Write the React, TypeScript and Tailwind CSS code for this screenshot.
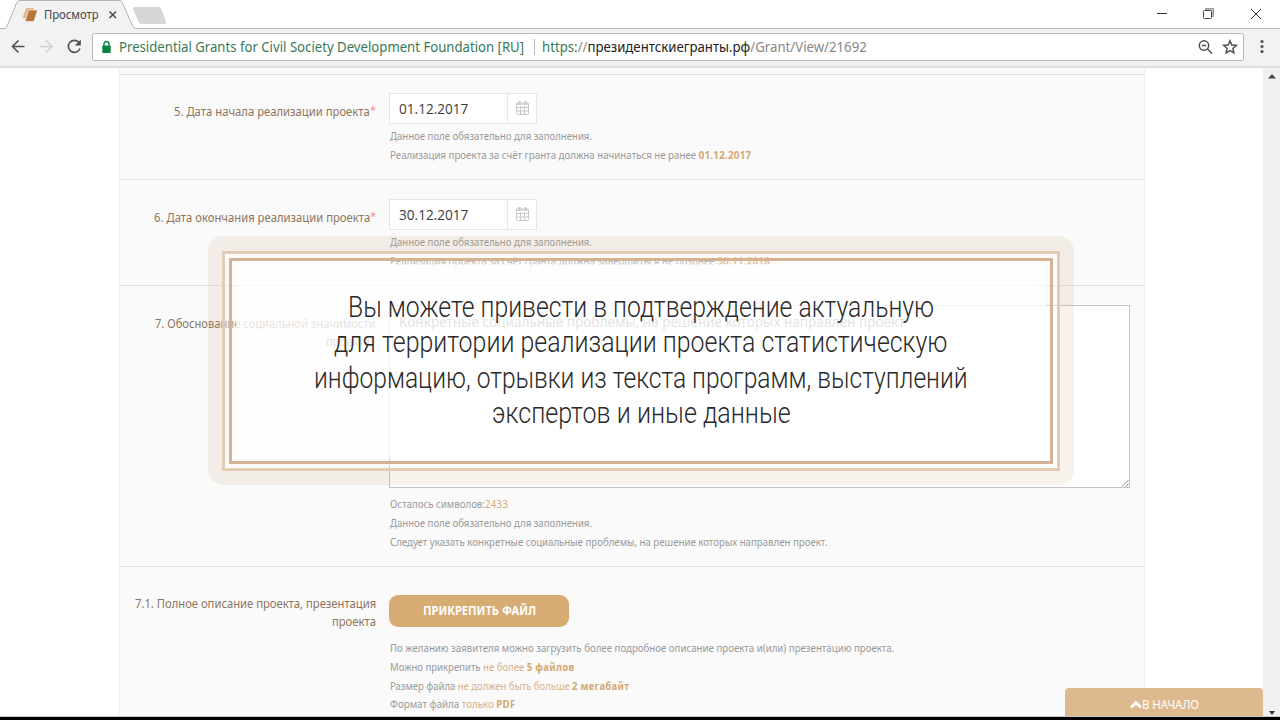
import { useLayoutEffect, useRef, useState } from 'react'
import type { ReactNode } from 'react'

// One line of text, condensed or stretched to the given width
function Fit({ w, className = '', children }: { w: number; className?: string; children: ReactNode }) {
  const ref = useRef<HTMLSpanElement>(null)
  const [scale, setScale] = useState(1)

  useLayoutEffect(() => {
    if (ref.current) setScale(w / ref.current.offsetWidth)
  }, [w])

  return (
    <span className={`inline-block whitespace-pre align-top ${className}`} style={{ width: w }}>
      <span ref={ref} className="inline-block origin-left align-top" style={{ transform: `scaleX(${scale})` }}>
        {children}
      </span>
    </span>
  )
}

function TabBar() {
  return (
    <div className="relative flex h-[29px] bg-white">
      <svg className="absolute inset-0" width="1280" height="29" fill="none">
        <path d="M0 28.5H4C6 28.5 6.500 27.500 7.500 25L16.500 3Q17.500 .5 20 .5H119Q121.500 .5 122.500 3L132.500 25.500Q134 28.500 136 28.500H1280V30H0Z" fill="#f2f2f2" stroke="#b4b4b4" />
        <path d="M135 7H158.500Q160.500 7 161.300 9L166 21.500Q166.800 24 164.500 24H142Q139.500 24 138.500 21.500L133 9Q132.300 7 135 7Z" fill="#d6d6d6" />
        <path d="M26 8H34L31 18H22.500Z" fill="#dfb98c" />
        <path d="M28.500 10H37.500L34 21.500H25Z" fill="#b4783c" stroke="#f2f2f2" strokeWidth=".7" />
        <path d="M109.500 11.500L116 18M116 11.500L109.500 18" stroke="#4a4a4a" strokeWidth="1.500" />
        <path d="M1157 13.500H1167M1251 9L1261 19M1261 9L1251 19" stroke="#333" />
        <path d="M1205.500 10.500V8.500H1213.500V16.500H1211.500" fill="#bbb" stroke="#999" />
        <rect x="1203.500" y="10.500" width="8" height="8" rx="1" fill="#fff" stroke="#444" />
      </svg>
      <div className="relative ml-11 pt-[5px] text-[12.500px] leading-5 text-[#444]">
        <Fit w={55}>Просмотр</Fit>
      </div>
    </div>
  )
}

function Toolbar() {
  return (
    <div className="flex h-[39px] items-start border-b-2 border-[#dedede] bg-[#f2f2f2] pt-1">
      <svg width="92" height="28" viewBox="0 0 92 28" fill="none" strokeWidth="1.600">
        <path d="M24.500 13.500H12.500M18.500 7.500L12.500 13.500L18.500 19.500" stroke="#505050" />
        <path d="M40 13.500H52M46 7.500L52 13.500L46 19.500" stroke="#d2d2d2" />
        <path d="M79 9.500A6 6 0 1 0 80 15.500" stroke="#505050" />
        <path d="M80.800 6.500V12.500H74.800Z" fill="#505050" />
      </svg>
      <div className="flex h-7 w-[1152px] items-center rounded-[2px] border border-[#b8b8b8] bg-white text-sm leading-5">
        <svg className="ml-[9px]" width="9" height="14" viewBox="0 0 9 14">
          <path d="M2 6V4A2.500 2.500 0 0 1 7 4V6" fill="none" stroke="#0b8043" strokeWidth="1.400" />
          <rect x=".3" y="5.500" width="8.400" height="7.500" rx=".8" fill="#0b8043" />
        </svg>
        <Fit w={405} className="ml-2 text-[#387a57]">Presidential Grants for Civil Society Development Foundation [RU]</Fit>
        <span className="ml-[10px] mr-[7px] h-4 w-px bg-[#bcbcbc]" />
        <Fit w={325}>
          <span className="text-[#387a57]">https:</span>
          <span className="text-[#888]">//</span>
          <span className="text-[#222]">президентскиегранты.рф</span>
          <span className="text-[#888]">/Grant/View/21692</span>
        </Fit>
        <svg className="ml-auto mr-1" width="42" height="20" viewBox="0 0 42 20" fill="none" stroke="#505050" strokeWidth="1.500">
          <circle cx="7" cy="8.500" r="4.700" />
          <path d="M10.500 12L15 16.500M4.800 8.500H9.200" />
          <path d="M33 3.800L34.800 8L39.300 8.400L35.900 11.400L36.900 15.800L33 13.500L29.100 15.800L30.100 11.400L26.700 8.400L31.200 8Z" />
        </svg>
      </div>
      <svg className="ml-4" width="5" height="28" fill="#505050">
        <circle cx="2" cy="8.500" r="1.600" />
        <circle cx="2" cy="13.500" r="1.600" />
        <circle cx="2" cy="18.500" r="1.600" />
      </svg>
    </div>
  )
}

function DateField({ value }: { value: string }) {
  return (
    <div className="flex h-[31px] w-[148px] border border-[#e6e6e6] bg-white font-['Open_Sans',sans-serif]">
      <div className="w-[118px] border-r border-[#e6e6e6] pl-[9px] pt-[4px] text-sm leading-[21px] text-[#3c3c3c]">
        <Fit w={69}>{value}</Fit>
      </div>
      <svg className="ml-[7px] mt-[6px]" width="15" height="16" fill="none" stroke="#c8c8c8">
        <rect x="1.500" y="3" width="12" height="11.500" rx="1" />
        <path d="M1 4H14M1 7.500H14M1 11H14M5.500 6V14M9.500 6V14" />
        <path d="M4.500 1V5M10.500 1V5" strokeWidth="2" />
      </svg>
    </div>
  )
}

function Label({ children }: { children: ReactNode }) {
  return <div className="flex w-64 shrink-0 flex-col items-end text-[13px] leading-[18px] text-[#8c7460]">{children}</div>
}

function Hints({ className = '', children }: { className?: string; children: ReactNode }) {
  return <div className={`flex flex-col pl-px text-[10.500px] leading-[18.800px] text-[#999] ${className}`}>{children}</div>
}

function Bold({ children }: { children: ReactNode }) {
  return <b className="tracking-[.3px] text-[#d4a873]">{children}</b>
}

const Star = () => <sup className="top-0 align-top text-[11px] leading-[15px] text-[#ee8f8f]">*</sup>

function Overlay() {
  return (
    <div className="absolute left-[208px] top-[236px] h-[249px] w-[866px] rounded-[15px] border-[14px] border-t-[15px] border-[#c9a777]/15">
      <div className="h-full border-[3px] border-[#e2ccb5] bg-white/30 p-1">
        <div className="h-full border-[3px] border-[#d4b292] px-1 pb-1 pt-[3px]">
          <div className="flex h-full flex-col items-center bg-white/70 pt-[26px] font-[Roboto] text-[29px] font-light leading-[35.400px] text-[#2a2a2a]">
            <Fit w={586}>Вы можете привести в подтверждение актуальную</Fit>
            <Fit w={614}>для территории реализации проекта статистическую</Fit>
            <Fit w={654}>информацию, отрывки из текста программ, выступлений</Fit>
            <Fit w={299}>экспертов и иные данные</Fit>
          </div>
        </div>
      </div>
    </div>
  )
}

export default function App() {
  return (
    <div className="relative h-[720px] w-[1280px] overflow-hidden bg-black font-['Noto_Sans',sans-serif]">
      <TabBar />
      <Toolbar />
      <div className="flex h-[649px] overflow-hidden border-b border-[#c8c8c8] bg-white">
        <main className="ml-[119px] h-[649px] w-[1026px] border-x border-[#f0f0f0] bg-[#fafafa] pt-[6px]">
          <section className="flex h-[105px] gap-[13px] border-t border-[#dedede] pt-[18px]">
            <Label>
              <div className="mt-[9px] flex">
                <Fit w={196}>5. Дата начала реализации проекта</Fit>
                <Star />
              </div>
            </Label>
            <div>
              <DateField value="01.12.2017" />
              <Hints className="mt-[3px]">
                <Fit w={202}>Данное поле обязательно для заполнения.</Fit>
                <Fit w={361}>Реализация проекта за счёт гранта должна начинаться не ранее <Bold>01.12.2017</Bold></Fit>
              </Hints>
            </div>
          </section>

          <section className="flex h-[106px] gap-[13px] border-t border-[#dedede] pt-[19px]">
            <Label>
              <div className="mt-[9px] flex">
                <Fit w={216}>6. Дата окончания реализации проекта</Fit>
                <Star />
              </div>
            </Label>
            <div>
              <DateField value="30.12.2017" />
              <Hints className="mt-[3px]">
                <Fit w={202}>Данное поле обязательно для заполнения.</Fit>
                <Fit w={380}>Реализация проекта за счёт гранта должна завершиться не позднее <Bold>30.11.2018</Bold></Fit>
              </Hints>
            </div>
          </section>

          <section className="flex h-[281px] gap-[13px] border-t border-[#dedede] pt-[19px]">
            <Label>
              <Fit w={221} className="mt-[9px]">7. Обоснование социальной значимости</Fit>
              <div className="flex">
                <Fit w={44}>проекта</Fit>
                <Star />
              </div>
            </Label>
            <div>
              <div className="relative h-[183px] w-[741px] border border-[#c6c6c6] bg-white pl-[9px] pt-[6px] text-[13.500px] leading-[21px] text-[#777]">
                <Fit w={506}>Конкретные социальные проблемы, на решение которых направлен проект</Fit>
                <svg className="absolute bottom-0 right-0" width="8" height="8" stroke="#888">
                  <path d="M1 7.500L7.500 1M4.500 7.500L7.500 4.500" />
                </svg>
              </div>
              <Hints className="mt-[7px]">
                <Fit w={118}>Осталось символов:<span className="tracking-[.3px] text-[#d9ab7c]">2433</span></Fit>
                <Fit w={202}>Данное поле обязательно для заполнения.</Fit>
                <Fit w={438}>Следует указать конкретные социальные проблемы, на решение которых направлен проект.</Fit>
              </Hints>
            </div>
          </section>

          <section className="flex h-[151px] gap-[13px] border-t border-[#dedede] pt-7">
            <Label>
              <Fit w={241} className="-mt-px">7.1. Полное описание проекта, презентация</Fit>
              <Fit w={44}>проекта</Fit>
            </Label>
            <div>
              <div className="h-8 w-[180px] rounded-[9px] bg-[#d7ac72] text-center text-[13px] font-bold leading-[31px] text-white">
                <Fit w={113}>ПРИКРЕПИТЬ ФАЙЛ</Fit>
              </div>
              <Hints className="mt-[12px]">
                <Fit w={504}>По желанию заявителя можно загрузить более подробное описание проекта и(или) презентацию проекта.</Fit>
                <Fit w={184}>Можно прикрепить <span className="text-[#d9b184]">не более <Bold>5 файлов</Bold></span></Fit>
                <Fit w={239}>Размер файла <span className="text-[#d9b184]">не должен быть больше <Bold>2 мегабайт</Bold></span></Fit>
                <Fit w={126}>Формат файла <span className="text-[#d9b184]">только <Bold>PDF</Bold></span></Fit>
              </Hints>
            </div>
          </section>
        </main>

        <div className="ml-auto flex h-full w-[17px] flex-col items-center justify-between bg-[#f1f1f1] pb-px pt-[6px]">
          <svg width="8" height="5" fill="#444"><path d="M0 4.500L4 0L8 4.500Z" /></svg>
          <svg width="6" height="4" fill="#333"><path d="M0 0H6L3 4Z" /></svg>
        </div>
      </div>

      <Overlay />

      <div className="absolute bottom-1 left-[1065px] flex h-7 w-[198px] items-center justify-center rounded-t-[4px] bg-[#dcba8e] pt-1 text-[13px] leading-5 text-white">
        <svg width="12" height="9" fill="none" stroke="#fff" strokeWidth="3"><path d="M1 7.500L6 2.500L11 7.500" /></svg>
        <Fit w={57}>В НАЧАЛО</Fit>
      </div>
    </div>
  )
}
